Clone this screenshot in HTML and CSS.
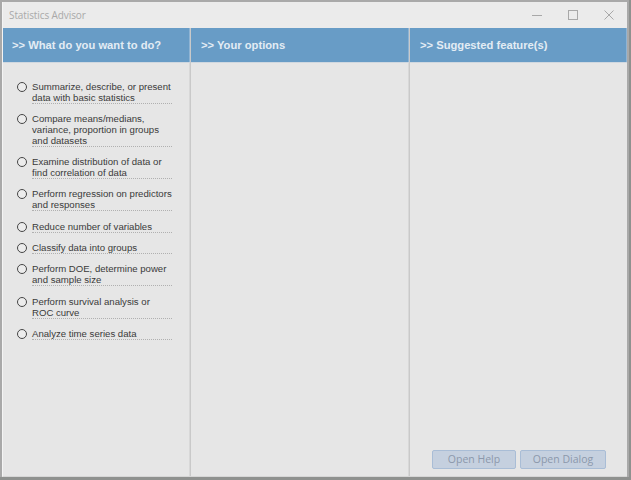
FILE: index.html
```html
<!DOCTYPE html>
<html>
<head>
<meta charset="utf-8">
<link rel="stylesheet" href="styles.css">
</head>
<body>
<div class="window">
  <div class="titlebar">
    <span class="title">Statistics Advisor</span>
    <div class="controls">
      <svg class="ctl" width="12" height="12" viewBox="0 0 12 12"><path d="M1 6.5h10" stroke="#a8a8a8" stroke-width="1"/></svg>
      <svg class="ctl" width="12" height="12" viewBox="0 0 12 12"><rect x="1.5" y="1.5" width="9" height="9" fill="none" stroke="#a8a8a8" stroke-width="1"/></svg>
      <svg class="ctl" width="12" height="12" viewBox="0 0 12 12"><path d="M1.5 1.5l9 9M10.5 1.5l-9 9" stroke="#a8a8a8" stroke-width="1"/></svg>
    </div>
  </div>
  <div class="panes">
    <div class="pane pane-what">
      <div class="head">&gt;&gt; What do you want to do?</div>
      <ul class="choices">
        <li><span class="radio"></span><span class="label">Summarize, describe, or present data with basic statistics</span></li>
        <li><span class="radio"></span><span class="label">Compare means/medians, variance, proportion in groups and datasets</span></li>
        <li><span class="radio"></span><span class="label">Examine distribution of data or find correlation of data</span></li>
        <li><span class="radio"></span><span class="label">Perform regression on predictors and responses</span></li>
        <li><span class="radio"></span><span class="label">Reduce number of variables</span></li>
        <li><span class="radio"></span><span class="label">Classify data into groups</span></li>
        <li><span class="radio"></span><span class="label">Perform DOE, determine power and sample size</span></li>
        <li><span class="radio"></span><span class="label">Perform survival analysis or ROC curve</span></li>
        <li><span class="radio"></span><span class="label">Analyze time series data</span></li>
      </ul>
    </div>
    <div class="pane pane-options">
      <div class="head">&gt;&gt; Your options</div>
    </div>
    <div class="pane pane-suggest">
      <div class="head">&gt;&gt; Suggested feature(s)</div>
      <div class="actions">
        <button class="btn btn-help">Open Help</button>
        <button class="btn btn-dialog">Open Dialog</button>
      </div>
    </div>
  </div>
</div>
</body>
</html>
```

FILE: styles.css
```css
html, body {
  margin: 0;
  padding: 0;
}
body {
  width: 631px;
  height: 480px;
  background: #8f918f;
  overflow: hidden;
  font-family: "Liberation Sans", Arial, sans-serif;
}
.window {
  margin: 0 2px 0 0;
  height: 477px;
  box-sizing: border-box;
  border-top: 2px solid #a9a9a9;
  border-left: 2px solid #a9a9a9;
  border-right: 2px solid #a9a9a9;
  background: #e6e6e6;
  display: flex;
  flex-direction: column;
  box-shadow: inset 0 -1px 0 #f0f0f0;
}
.titlebar {
  height: 26px;
  flex: none;
  background: #ebebeb;
  display: flex;
  align-items: center;
  justify-content: space-between;
  padding-left: 6px;
  border-left: 1px solid #f4f4f4;
}
.title {
  font-family: "Open Sans", sans-serif;
  font-size: 10px;
  color: #a9a9a9;
  letter-spacing: -0.1px;
}
.controls {
  display: flex;
  gap: 24px;
  padding-right: 12px;
}
.ctl {
  display: block;
}
.panes {
  flex: 1;
  display: grid;
  grid-template-columns: 188px 219px 1fr;
  border-left: 1px solid #f4f4f4;
  border-bottom: 1px solid #d6d6d6;
}
.pane {
  display: flex;
  flex-direction: column;
  border-right: 1px solid #c9c9c9;
  box-shadow: inset -1px 0 0 #d8d8d8;
}
.pane-suggest {
  border-right: none;
  box-shadow: none;
}
.head {
  height: 35px;
  flex: none;
  background: #689cc6;
  color: #e3ecf4;
  font-weight: bold;
  font-size: 11.2px;
  display: flex;
  align-items: center;
  padding-left: 9px;
  border-bottom: 1px solid #d0d8e0;
  box-sizing: border-box;
  box-shadow: inset -1px 0 0 #8fb4d4;
}
.pane-options .head,
.pane-suggest .head {
  padding-left: 10px;
}
.choices {
  list-style: none;
  margin: 0;
  padding: 17.5px 0 0 14px;
  display: flex;
  flex-direction: column;
  gap: 9.3px;
}
.choices li {
  display: flex;
  align-items: flex-start;
}
.radio {
  flex: none;
  width: 8px;
  height: 8px;
  border: 1.3px solid #454545;
  border-radius: 50%;
  margin-top: 1px;
  margin-right: 5px;
  background: #ececec;
}
.label {
  width: 140px;
  font-size: 9.6px;
  line-height: 11px;
  color: #3a3a3a;
  padding-bottom: 0;
  border-bottom: 1px dotted #b0b0b0;
}
.actions {
  margin-top: auto;
  display: flex;
  justify-content: flex-end;
  gap: 4px;
  padding: 0 21px 7px 0;
}
.btn {
  font-family: "Open Sans", sans-serif;
  font-size: 10.5px;
  color: #8c98ab;
  background: #c5d0df;
  border: 1px solid #a9bdd6;
  border-radius: 2px;
  height: 19px;
  padding: 0;
  line-height: 17px;
}
.btn-help {
  width: 84px;
}
.btn-dialog {
  width: 86px;
}
```
